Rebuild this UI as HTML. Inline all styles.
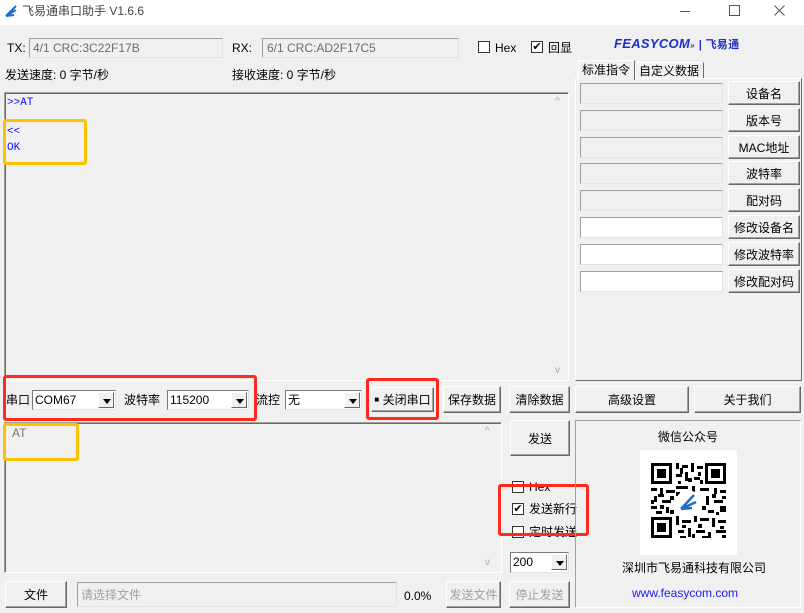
<!DOCTYPE html>
<html><head><meta charset="utf-8"><style>
*{box-sizing:border-box;margin:0;padding:0}
body{width:804px;height:613px;background:#f0f0f0;font-family:"Liberation Sans","Noto Sans CJK SC",sans-serif;font-size:12px;color:#000;position:relative;overflow:hidden}
.a{position:absolute}
.t{position:absolute;white-space:nowrap;line-height:14px}
.sunk{position:absolute;border:1px solid #a0a0a0;border-right-color:#fff;border-bottom-color:#fff;box-shadow:inset 1px 1px 0 #696969}
.fld{position:absolute;border:1px solid #a0a0a0;border-right-color:#e3e3e3;border-bottom-color:#e3e3e3;background:#f0f0f0}
.btn{position:absolute;background:#f0f0f0;border:1px solid #fff;border-right-color:#696969;border-bottom-color:#696969;box-shadow:inset -1px -1px 0 #a0a0a0;text-align:center;display:flex;align-items:center;justify-content:center;white-space:nowrap}
.dis{color:#a0a0a0}
.combo{position:absolute;background:#fff;border:1px solid #7a7a7a;border-right-color:#e3e3e3;border-bottom-color:#e3e3e3;padding-left:2px;line-height:18px}
.combo .ar{position:absolute;right:1px;top:1px;width:16px;height:16px;background:#f0f0f0;border:1px solid #fff;border-right-color:#696969;border-bottom-color:#696969}
.combo .ar:after{content:"";position:absolute;left:4px;top:6px;border:4px solid transparent;border-top:5px solid #000;border-bottom:0}
.cb{position:absolute;width:12px;height:12px;background:#fff;border:1px solid #333;font-size:11px;line-height:10px;text-align:center}
.red{position:absolute;border:3px solid #ff2a1a;border-radius:3px}
.org{position:absolute;border:3px solid #ffc000;border-radius:3px}
.mono{font-family:"Liberation Mono","Noto Sans CJK SC",monospace;color:#1010ff;font-size:11px}
</style></head><body>
<div class="a" style="left:0;top:0;width:804px;height:25px;background:#fff"></div>
<svg class="a" style="left:4px;top:4px" width="14" height="14"><path d="M2 12 L12 2 M2 12 L12 6 M2 12 L10 11" stroke="#1e6fc8" stroke-width="2" fill="none"/></svg>
<div class="t" style="left:22px;top:4px;font-size:12px;color:#444">飞易通串口助手 V1.6.6</div>
<div class="a" style="left:680px;top:11px;width:10px;height:1px;background:#555"></div>
<div class="a" style="left:729px;top:5px;width:11px;height:11px;border:1px solid #555"></div>
<svg class="a" style="left:774px;top:5px" width="11" height="11"><path d="M0.5 0.5 L10.5 10.5 M10.5 0.5 L0.5 10.5" stroke="#555" stroke-width="1"/></svg>

<div class="t" style="left:7px;top:41px">TX:</div>
<div class="fld" style="left:29px;top:38px;width:194px;height:20px"></div>
<div class="t dis" style="left:33px;top:41px;color:#6d6d6d">4/1 CRC:3C22F17B</div>
<div class="t" style="left:232px;top:41px">RX:</div>
<div class="fld" style="left:262px;top:38px;width:197px;height:20px"></div>
<div class="t" style="left:267px;top:41px;color:#6d6d6d">6/1 CRC:AD2F17C5</div>
<div class="cb" style="left:478px;top:41px"></div><div class="t" style="left:495px;top:41px">Hex</div>
<div class="cb" style="left:531px;top:41px">✔</div><div class="t" style="left:548px;top:41px">回显</div>
<div class="t" style="left:614px;top:37px;font-weight:900;font-style:italic;color:#1a2fcc;font-size:13px;letter-spacing:0.3px">FEASYCOM<span style="font-size:8px">»</span> <span style="font-style:normal;font-size:11px;font-weight:bold">| 飞易通</span></div>

<div class="t" style="left:5px;top:68px">发送速度: 0 字节/秒</div>
<div class="t" style="left:232px;top:68px">接收速度: 0 字节/秒</div>

<div class="a" style="left:578px;top:60px;width:57px;height:20px;border:1px solid #fff;border-right-color:#696969;border-bottom:none;background:#f0f0f0;z-index:2"></div>
<div class="t" style="left:582px;top:63px;z-index:3">标准指令</div>
<div class="a" style="left:635px;top:62px;width:69px;height:17px;border:1px solid #fff;border-right-color:#696969;border-bottom:none"></div>
<div class="t" style="left:639px;top:64px">自定义数据</div>
<div class="a" style="left:575px;top:78px;width:227px;height:303px;border:1px solid #fff;border-right-color:#696969;border-bottom-color:#696969"></div>

<div class="sunk" style="left:4px;top:92px;width:565px;height:289px"></div>
<div class="t" style="left:555px;top:95px;color:#aaa;font-size:10px">^</div>
<div class="t" style="left:555px;top:364px;color:#aaa;font-size:10px">v</div>
<div class="t mono" style="left:7px;top:96px">&gt;&gt;AT</div>
<div class="t mono" style="left:7px;top:125px">&lt;&lt;</div>
<div class="t mono" style="left:7px;top:141px">OK</div>
<div class="org" style="left:3px;top:119px;width:84px;height:46px"></div>

<div class="fld" style="left:580px;top:83px;width:143px;height:21px"></div><div class="btn" style="left:728px;top:81px;width:72px;height:24px">设备名</div>
<div class="fld" style="left:580px;top:110px;width:143px;height:21px"></div><div class="btn" style="left:728px;top:108px;width:72px;height:24px">版本号</div>
<div class="fld" style="left:580px;top:137px;width:143px;height:21px"></div><div class="btn" style="left:728px;top:135px;width:72px;height:24px">MAC地址</div>
<div class="fld" style="left:580px;top:163px;width:143px;height:21px"></div><div class="btn" style="left:728px;top:161px;width:72px;height:24px">波特率</div>
<div class="fld" style="left:580px;top:190px;width:143px;height:21px"></div><div class="btn" style="left:728px;top:188px;width:72px;height:24px">配对码</div>
<div class="fld" style="left:580px;top:217px;width:143px;height:21px;background:#fff"></div><div class="btn" style="left:728px;top:215px;width:72px;height:24px">修改设备名</div>
<div class="fld" style="left:580px;top:244px;width:143px;height:21px;background:#fff"></div><div class="btn" style="left:728px;top:242px;width:72px;height:24px">修改波特率</div>
<div class="fld" style="left:580px;top:271px;width:143px;height:21px;background:#fff"></div><div class="btn" style="left:728px;top:269px;width:72px;height:24px">修改配对码</div>

<div class="t" style="left:6px;top:393px">串口</div>
<div class="combo" style="left:32px;top:390px;width:84px;height:20px">COM67<div class="ar"></div></div>
<div class="t" style="left:124px;top:393px">波特率</div>
<div class="combo" style="left:167px;top:390px;width:82px;height:20px">115200<div class="ar"></div></div>
<div class="t" style="left:256px;top:393px">流控</div>
<div class="combo" style="left:285px;top:390px;width:77px;height:20px">无<div class="ar"></div></div>
<div class="btn" style="left:371px;top:387px;width:63px;height:25px"><span style="font-size:8px">■</span>&nbsp;关闭串口</div>
<div class="btn" style="left:443px;top:386px;width:58px;height:27px">保存数据</div>
<div class="btn" style="left:509px;top:386px;width:61px;height:27px">清除数据</div>
<div class="btn" style="left:575px;top:386px;width:114px;height:27px">高级设置</div>
<div class="btn" style="left:694px;top:386px;width:107px;height:27px">关于我们</div>
<div class="red" style="left:3px;top:375px;width:254px;height:46px"></div>
<div class="red" style="left:366px;top:378px;width:73px;height:42px"></div>

<div class="sunk" style="left:4px;top:422px;width:498px;height:151px"></div>
<div class="t" style="left:12px;top:426px;color:#777">AT</div>
<div class="t" style="left:485px;top:425px;color:#aaa;font-size:10px">^</div>
<div class="t" style="left:485px;top:556px;color:#aaa;font-size:10px">v</div>
<div class="org" style="left:3px;top:423px;width:76px;height:38px"></div>
<div class="btn" style="left:510px;top:420px;width:60px;height:36px">发送</div>
<div class="cb" style="left:512px;top:481px"></div><div class="t" style="left:529px;top:480px">Hex</div>
<div class="cb" style="left:512px;top:503px">✔</div><div class="t" style="left:529px;top:502px">发送新行</div>
<div class="cb" style="left:512px;top:526px"></div><div class="t" style="left:529px;top:525px">定时发送</div>
<div class="red" style="left:498px;top:484px;width:91px;height:52px"></div>
<div class="combo" style="left:510px;top:552px;width:59px;height:21px">200<div class="ar"></div></div>

<div class="a" style="left:575px;top:420px;width:226px;height:188px;border:1px solid #a0a0a0;border-right-color:#fff;border-bottom-color:#fff"></div>
<div class="t" style="left:658px;top:430px">微信公众号</div>
<svg class="a" style="left:640px;top:450px" width="97" height="105" viewBox="0 0 97 105">
<rect width="97" height="105" fill="#fff"/>
<g fill="#000">
<rect x="11" y="13" width="21" height="21"/><rect x="14" y="16" width="15" height="15" fill="#fff"/><rect x="17" y="19" width="9" height="9"/>
<rect x="65" y="13" width="21" height="21"/><rect x="68" y="16" width="15" height="15" fill="#fff"/><rect x="71" y="19" width="9" height="9"/>
<rect x="11" y="67" width="21" height="21"/><rect x="14" y="70" width="15" height="15" fill="#fff"/><rect x="17" y="73" width="9" height="9"/>
<rect x="36" y="13" width="3" height="6"/><rect x="42" y="15" width="6" height="3"/><rect x="51" y="13" width="3" height="9"/><rect x="57" y="16" width="6" height="3"/>
<rect x="36" y="24" width="6" height="3"/><rect x="45" y="22" width="3" height="9"/><rect x="54" y="27" width="6" height="3"/><rect x="38" y="31" width="3" height="3"/>
<rect x="40" y="18" width="3" height="6"/><rect x="58" y="22" width="3" height="4"/><rect x="48" y="28" width="4" height="4"/><rect x="60" y="30" width="3" height="4"/>
<rect x="11" y="38" width="6" height="3"/><rect x="20" y="38" width="3" height="6"/><rect x="26" y="40" width="9" height="3"/><rect x="14" y="46" width="3" height="6"/>
<rect x="22" y="50" width="9" height="3"/><rect x="11" y="56" width="6" height="3"/><rect x="26" y="57" width="3" height="6"/><rect x="16" y="61" width="6" height="3"/>
<rect x="18" y="44" width="6" height="3"/><rect x="30" y="46" width="4" height="4"/><rect x="11" y="50" width="3" height="4"/><rect x="20" y="55" width="4" height="4"/><rect x="30" y="60" width="4" height="4"/>
<rect x="36" y="36" width="12" height="3"/><rect x="52" y="36" width="3" height="6"/><rect x="60" y="38" width="9" height="3"/><rect x="74" y="38" width="3" height="6"/><rect x="80" y="40" width="6" height="3"/>
<rect x="66" y="46" width="3" height="9"/><rect x="74" y="50" width="9" height="3"/><rect x="80" y="56" width="6" height="6"/><rect x="68" y="60" width="6" height="3"/>
<rect x="36" y="42" width="4" height="4"/><rect x="72" y="44" width="4" height="4"/><rect x="82" y="46" width="4" height="3"/><rect x="62" y="56" width="4" height="4"/><rect x="76" y="62" width="3" height="3"/>
<rect x="36" y="66" width="3" height="9"/><rect x="42" y="70" width="9" height="3"/><rect x="54" y="66" width="3" height="6"/><rect x="60" y="68" width="9" height="3"/>
<rect x="72" y="68" width="3" height="9"/><rect x="78" y="70" width="8" height="3"/><rect x="38" y="80" width="6" height="3"/><rect x="48" y="78" width="3" height="9"/>
<rect x="56" y="80" width="9" height="3"/><rect x="68" y="82" width="3" height="6"/><rect x="76" y="80" width="10" height="3"/><rect x="40" y="86" width="6" height="2"/><rect x="62" y="86" width="6" height="2"/>
<rect x="42" y="75" width="4" height="3"/><rect x="58" y="74" width="4" height="4"/><rect x="80" y="76" width="4" height="3"/><rect x="52" y="84" width="3" height="4"/><rect x="82" y="85" width="4" height="3"/>
</g>
<circle cx="48" cy="52" r="12" fill="#fff"/>
<path d="M41 59 L54 45 M41 59 L56 52 M41 59 L52 58" stroke="#1e6fc8" stroke-width="2.5" fill="none"/>
</svg>
<div class="t" style="left:622px;top:561px">深圳市飞易通科技有限公司</div>
<div class="t" style="left:632px;top:586px;color:#1a1aff">www.feasycom.com</div>

<div class="btn" style="left:5px;top:581px;width:62px;height:27px">文件</div>
<div class="fld" style="left:77px;top:582px;width:320px;height:25px"></div>
<div class="t dis" style="left:81px;top:588px">请选择文件</div>
<div class="t" style="left:404px;top:589px">0.0%</div>
<div class="btn dis" style="left:446px;top:581px;width:55px;height:27px">发送文件</div>
<div class="btn dis" style="left:509px;top:581px;width:61px;height:27px">停止发送</div>
</body></html>
